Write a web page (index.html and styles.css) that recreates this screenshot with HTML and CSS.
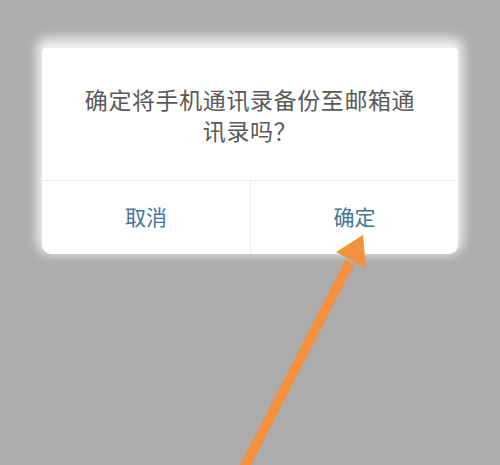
FILE: index.html
```html
<!DOCTYPE html>
<html lang="zh-CN">
<head>
<meta charset="utf-8">
<title>备份通讯录</title>
<link rel="stylesheet" href="styles.css">
</head>
<body>
<div class="screen">
  <div class="dialog">
    <p class="message">确定将手机通讯录备份至邮箱通讯录吗？</p>
    <div class="actions">
      <button class="action">取消</button>
      <button class="action">确定</button>
    </div>
  </div>
  <svg class="pointer" width="500" height="465" viewBox="0 0 500 465">
    <path d="M242 472 Q300 360 350 262" fill="none" stroke="#f4913f" stroke-width="10" stroke-linecap="butt"/>
    <polygon points="363,235 336,252 366,268" fill="#f4913f"/>
  </svg>
</div>
</body>
</html>
```
FILE: styles.css
```css
html, body {
  margin: 0;
  padding: 0;
}

body {
  background: #acacac;
  font-family: "Noto Sans CJK SC", "Noto Sans", sans-serif;
}

.screen {
  position: relative;
  width: 500px;
  height: 465px;
  overflow: hidden;
  padding-top: 48px;
  box-sizing: border-box;
}

.dialog {
  margin-left: 42px;
  width: 416px;
  background: #ffffff;
  border-radius: 4px 4px 9px 9px;
  box-shadow: 0 -5px 12px 5px rgba(255, 255, 255, 0.85);
}

.message {
  margin: 0;
  padding: 36px 40px 34px;
  text-align: center;
  font-size: 23px;
  letter-spacing: 0.6px;
  line-height: 31px;
  color: #5a5a5a;
}

.actions {
  display: grid;
  grid-template-columns: 1fr 1fr;
  border-top: 1px solid #ececec;
  height: 73px;
}

.action {
  border: 0;
  background: transparent;
  font-family: inherit;
  font-size: 21px;
  color: #44749a;
  padding: 0 0 4px;
}

.action + .action {
  border-left: 1px solid #ececec;
}

.pointer {
  position: absolute;
  left: 0;
  top: 0;
}
```
